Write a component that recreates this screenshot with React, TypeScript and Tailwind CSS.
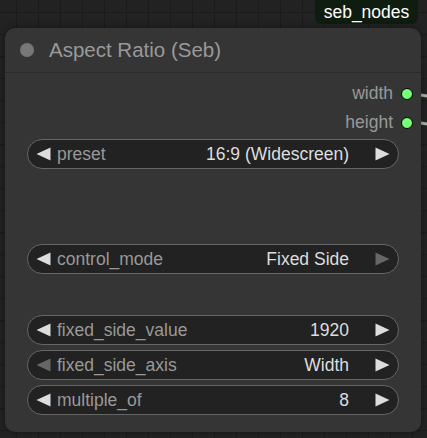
import React from "react";

type Widget = {
  label: string;
  value: string;
  leftOff?: boolean;
  rightOff?: boolean;
  className?: string;
};

function Arrow({ dir, off }: { dir: "l" | "r"; off?: boolean }) {
  return (
    <svg width="15" height="14" viewBox="0 0 15 14" className={off ? "text-[#666]" : "text-[#ddd]"}>
      {dir === "l" ? (
        <polygon points="14.5,0.5 14.5,13.5 0.5,7" fill="currentColor" />
      ) : (
        <polygon points="0.5,0.5 0.5,13.5 14.5,7" fill="currentColor" />
      )}
    </svg>
  );
}

function ComboWidget({ label, value, leftOff, rightOff, className }: Widget) {
  return (
    <div
      className={`flex h-[30px] items-center rounded-full border border-[#666] bg-[#222] pl-[8px] pr-[8px] text-[17.5px] ${className ?? ""}`}
    >
      <Arrow dir="l" off={leftOff} />
      <span className="ml-[6px] text-[#999]">{label}</span>
      <span className="ml-auto mr-[26px] text-[#ddd]">{value}</span>
      <Arrow dir="r" off={rightOff} />
    </div>
  );
}

function Output({ name }: { name: string }) {
  return (
    <div className="flex h-[29px] items-center justify-end pr-[8px]">
      <span className="text-[17.5px] text-[#999]">{name}</span>
      <span className="ml-[8px] h-[12px] w-[12px] rounded-full border-[1.5px] border-black bg-[#7f7]" />
    </div>
  );
}

export default function App() {
  return (
    <div
      className="relative h-[438px] w-[427px] overflow-hidden bg-[#222] bg-[linear-gradient(#1b1b1b_1px,transparent_1px),linear-gradient(90deg,#1b1b1b_1px,transparent_1px)] bg-[size:22px_22px] bg-[position:-6px_-10px]"
      style={{ fontFamily: '"Liberation Sans", Arial, sans-serif' }}
    >
      {/* links leaving the outputs */}
      <svg className="absolute left-0 top-0" width="427" height="438">
        <path d="M407 94 C 430 94, 440 100, 460 110" stroke="#a5b4a5" strokeWidth="3" fill="none" />
        <path d="M407 122 C 430 122, 440 128, 460 138" stroke="#a5b4a5" strokeWidth="3" fill="none" />
      </svg>

      <div className="absolute left-[315px] top-0 flex h-[24px] w-[103px] items-center justify-center rounded-b-[6px] bg-[#0f1d10] text-[17.5px] text-white">
        seb_nodes
      </div>

      <div className="absolute left-[5px] top-[28px] flex h-[404px] w-[416px] flex-col rounded-[10px] bg-[#353535] shadow-[0_0_6px_rgba(0,0,0,0.4)]">
        <div className="flex h-[45px] items-center border-b-[1.5px] border-[#2b2b2b] pl-[15px]">
          <span className="h-[14px] w-[14px] rounded-full bg-[#777]" />
          <span className="ml-[15px] text-[20.5px] text-[#999]">Aspect Ratio (Seb)</span>
        </div>

        <div className="mt-[6px] flex flex-col">
          <Output name="width" />
          <Output name="height" />
        </div>

        <div className="mt-[2px] flex flex-col px-[22px]">
          <ComboWidget label="preset" value="16:9 (Widescreen)" />
          <ComboWidget label="control_mode" value="Fixed Side" rightOff className="mt-[75px]" />
          <ComboWidget label="fixed_side_value" value="1920" className="mt-[41px]" />
          <ComboWidget label="fixed_side_axis" value="Width" leftOff className="mt-[5px]" />
          <ComboWidget label="multiple_of" value="8" className="mt-[5px]" />
        </div>
      </div>
    </div>
  );
}
